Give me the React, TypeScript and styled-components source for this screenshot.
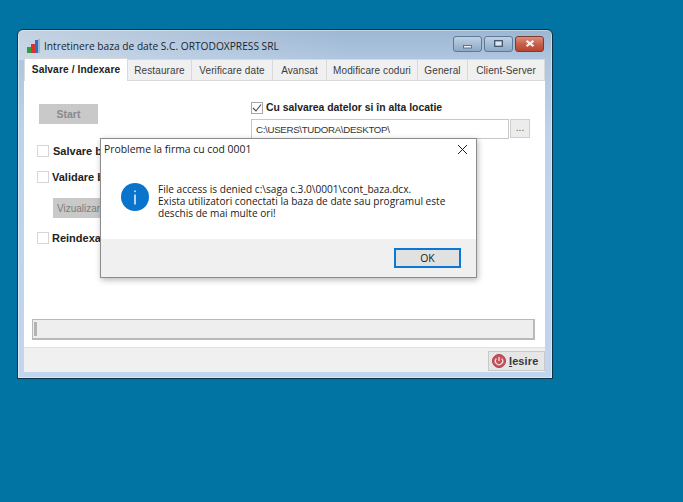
import styled, { createGlobalStyle } from 'styled-components';

const GlobalStyle = createGlobalStyle`
  html, body { margin: 0; padding: 0; height: 100%; }
  body { background: #0174a4; overflow: hidden; font-family: "Liberation Sans", Arial, sans-serif; }
`;

const Desktop = styled.div`
  position: relative;
  width: 683px;
  height: 502px;
  background: #0174a4;
`;

const AppWindow = styled.div`
  position: absolute;
  left: 17px;
  top: 29px;
  width: 536px;
  height: 350px;
  box-sizing: border-box;
  border: 1px solid #0c3346;
  border-radius: 6px 6px 0 0;
  background:
    linear-gradient(90deg, rgba(226, 232, 238, 0.55) 0%, rgba(226, 232, 238, 0) 62%) 0 0 / 100% 30px no-repeat,
    linear-gradient(180deg, #9db6d2 0%, #adc5df 8%, #bdd3ec 30%, #c1d6ee 100%);
  box-shadow: inset 0 0 0 1px rgba(255, 255, 255, 0.4);
  display: flex;
  flex-direction: column;
  padding: 0 7px 6px 6px;
`;

const TitleBar = styled.div`
  height: 27px;
  flex: none;
  display: flex;
  align-items: center;
  padding: 5px 0 0 3px;
  box-sizing: border-box;
`;

const AppTitle = styled.div`
  margin-left: 3px;
  font-family: "Open Sans", sans-serif;
  font-size: 10.2px;
  color: #1b2530;
  flex: 1;
  white-space: nowrap;
`;

const Controls = styled.div`
  display: flex;
  gap: 2px;
  margin: -5px 1px 0 0;
`;

const Control = styled.div<{ $danger?: boolean }>`
  width: 29px;
  height: 16px;
  box-sizing: border-box;
  border: 1px solid ${(p) => (p.$danger ? '#7d3a30' : '#5d7a98')};
  border-radius: 3px;
  background: ${(p) =>
    p.$danger
      ? 'linear-gradient(180deg, #d9907f 0%, #c8604c 50%, #b9432f 100%)'
      : 'linear-gradient(180deg, #c0d2e4 0%, #a6bdd5 50%, #8fa9c5 100%)'};
  display: flex;
  align-items: center;
  justify-content: center;
`;

const TabStrip = styled.div`
  display: flex;
  align-items: flex-end;
  height: 24px;
  flex: none;
`;

const Tab = styled.div<{ $w: number; $active?: boolean }>`
  width: ${(p) => p.$w}px;
  height: ${(p) => (p.$active ? 23 : 22)}px;
  box-sizing: border-box;
  display: flex;
  align-items: center;
  justify-content: center;
  background: ${(p) => (p.$active ? '#ffffff' : '#f0f0f0')};
  border: 1px solid #d9d9d9;
  border-left-width: ${(p) => (p.$active ? 1 : 0)}px;
  border-bottom: ${(p) => (p.$active ? 'none' : '1px solid #d9d9d9')};
  font-size: ${(p) => (p.$active ? 10.2 : 10)}px;
  font-weight: ${(p) => (p.$active ? 700 : 400)};
  padding-bottom: ${(p) => (p.$active ? 2 : 0)}px;
  letter-spacing: 0.1px;
  color: ${(p) => (p.$active ? '#222' : '#3c3c3c')};
`;

const Page = styled.div`
  flex: 1;
  background: #ffffff;
  display: flex;
  flex-direction: column;
  min-height: 0;
`;

const Columns = styled.div`
  display: flex;
  height: 238px;
  flex: none;
  box-sizing: border-box;
  padding: 20px 15px 0 13px;
`;

const LeftColumn = styled.div`
  width: 214px;
  flex: none;
  display: flex;
  flex-direction: column;
  align-items: flex-start;
  padding-top: 3px;
`;

const RightColumn = styled.div`
  flex: 1;
  display: flex;
  flex-direction: column;
`;

const GreyButton = styled.div<{ $w: number; $ml: number; $mb: number; $plain?: boolean }>`
  width: ${(p) => p.$w}px;
  height: 20px;
  margin-left: ${(p) => p.$ml}px;
  margin-bottom: ${(p) => p.$mb}px;
  background: #c9c9c9;
  color: ${(p) => (p.$plain ? '#7c7c7c' : '#8a8a8a')};
  font-size: ${(p) => (p.$plain ? 10 : 10.5)}px;
  font-weight: ${(p) => (p.$plain ? 400 : 700)};
  display: flex;
  align-items: center;
  justify-content: ${(p) => (p.$plain ? 'flex-start' : 'center')};
  padding-left: ${(p) => (p.$plain ? 4 : 0)}px;
  box-sizing: border-box;
  white-space: nowrap;
  flex: none;
`;

const CheckRow = styled.div<{ $mb?: number; $size?: number }>`
  display: flex;
  align-items: center;
  margin-bottom: ${(p) => p.$mb ?? 0}px;
  font-size: ${(p) => p.$size ?? 11}px;
  font-weight: 700;
  color: #222;
  white-space: nowrap;
  height: 13px;
`;

const Box = styled.span<{ $gap: number; $checked?: boolean }>`
  width: 12px;
  height: 12px;
  box-sizing: border-box;
  background: #fff;
  border: 1px solid ${(p) => (p.$checked ? '#a6a6a6' : '#d6d6d6')};
  margin-right: ${(p) => p.$gap}px;
  display: inline-flex;
  align-items: center;
  justify-content: center;
  flex: none;
`;

const PathRow = styled.div`
  display: flex;
  margin-top: 5px;
`;

const PathField = styled.div`
  width: 258px;
  height: 20px;
  box-sizing: border-box;
  border: 1px solid #c8c8c8;
  background: #fff;
  font-size: 9.7px;
  letter-spacing: -0.3px;
  color: #333;
  display: flex;
  align-items: center;
  padding-left: 4px;
`;

const BrowseButton = styled.div`
  width: 20px;
  height: 19px;
  margin-left: 1px;
  box-sizing: border-box;
  border: 1px solid #cfcfcf;
  background: #ececec;
  font-size: 10px;
  color: #555;
  text-align: center;
  line-height: 16px;
`;

const StatusWrap = styled.div`
  flex: 1;
  padding: 0 10px 0 8px;
`;

const StatusBar = styled.div`
  height: 21px;
  box-sizing: border-box;
  border: 1px solid #b9b9b9;
  border-bottom-width: 2px;
  border-right-width: 2px;
  background: #eeeeee;
  padding: 2px 1px;
  display: flex;
`;

const StatusMark = styled.div`
  width: 3px;
  background: #b4b4b4;
`;

const Footer = styled.div`
  height: 25px;
  flex: none;
  background: #f0f0f0;
  border-top: 1px solid #e2e2e2;
  box-sizing: border-box;
  display: flex;
  justify-content: flex-end;
  align-items: flex-start;
  padding-top: 3px;
`;

const ExitButton = styled.div`
  width: 57px;
  height: 20px;
  box-sizing: border-box;
  border: 1px solid #c9c9c9;
  background: #e6e6e6;
  display: flex;
  align-items: center;
  padding-left: 3px;
  gap: 3px;
  font-size: 11px;
  font-weight: 700;
  color: #3a3a3a;
  letter-spacing: 0.1px;
`;

const Dialog = styled.div`
  position: absolute;
  left: 100px;
  top: 138px;
  width: 377px;
  height: 140px;
  box-sizing: border-box;
  border: 1px solid #8c8c8c;
  background: #fff;
  box-shadow: 1px 2px 6px rgba(0, 0, 0, 0.28);
  display: flex;
  flex-direction: column;
  font-family: "Open Sans", sans-serif;
  color: #1a1a1a;
`;

const DialogHead = styled.div`
  height: 20px;
  flex: none;
  display: flex;
  align-items: center;
  justify-content: space-between;
  padding: 0 8px 0 3px;
  font-size: 10.4px;
`;

const DialogBody = styled.div`
  flex: 1;
  display: flex;
  align-items: flex-start;
  padding: 24px 0 0 20px;
`;

const Message = styled.div`
  margin-left: 9px;
  font-size: 10.1px;
  line-height: 12px;
  white-space: nowrap;
`;

const DialogFoot = styled.div`
  height: 38px;
  flex: none;
  background: #f0f0f0;
  display: flex;
  justify-content: flex-end;
  align-items: flex-start;
  padding: 9px 15px 0 0;
  box-sizing: border-box;
`;

const OkButton = styled.div`
  width: 67px;
  height: 20px;
  box-sizing: border-box;
  border: 2px solid #0a78d4;
  background: #e1e1e1;
  font-size: 10.4px;
  display: flex;
  align-items: center;
  justify-content: center;
`;

const tabs = [
  { label: 'Salvare / Indexare', w: 104, active: true },
  { label: 'Restaurare', w: 64 },
  { label: 'Verificare date', w: 81 },
  { label: 'Avansat', w: 54 },
  { label: 'Modificare coduri', w: 91 },
  { label: 'General', w: 50 },
  { label: 'Client-Server', w: 77 },
];

function ChartIcon() {
  return (
    <svg width="14" height="14" viewBox="0 0 14 14">
      <rect x="0" y="8" width="4" height="6" fill="#2e9e3f" />
      <rect x="4" y="5" width="4" height="9" fill="#d9342b" />
      <rect x="8" y="1" width="3" height="13" fill="#2f6fc4" />
      <rect x="11" y="0" width="2" height="14" fill="#9db8d6" />
    </svg>
  );
}

function InfoIcon() {
  return (
    <svg width="28" height="28" viewBox="0 0 28 28">
      <circle cx="14" cy="14" r="14" fill="#0a74cc" />
      <rect x="13.3" y="11.5" width="1.4" height="10" fill="#fff" />
      <rect x="13.3" y="7.5" width="1.4" height="1.6" fill="#fff" />
    </svg>
  );
}

function PowerIcon() {
  return (
    <svg width="14" height="14" viewBox="0 0 14 14">
      <circle cx="7" cy="7" r="6.5" fill="#c9505a" stroke="#a8424c" />
      <path d="M4.4 4.6 A3.6 3.6 0 1 0 9.6 4.6" fill="none" stroke="#f7dfe0" strokeWidth="1.3" />
      <path d="M7 3 V7" stroke="#f7dfe0" strokeWidth="1.3" />
    </svg>
  );
}

export default function App() {
  return (
    <Desktop>
      <GlobalStyle />
      <AppWindow>
        <TitleBar>
          <ChartIcon />
          <AppTitle>Intretinere baza de date S.C. ORTODOXPRESS SRL</AppTitle>
          <Controls>
            <Control>
              <svg width="9" height="10" viewBox="0 0 9 10">
                <rect x="0.5" y="6.5" width="8" height="2.5" fill="#e8eef5" stroke="#4a5f78" strokeWidth="0.8" />
              </svg>
            </Control>
            <Control>
              <svg width="9" height="7" viewBox="0 0 9 7">
                <rect x="0.7" y="0.7" width="7.6" height="5.6" fill="#dfe7ef" stroke="#3f5570" strokeWidth="1.3" />
              </svg>
            </Control>
            <Control $danger>
              <svg width="10" height="7" viewBox="0 0 10 7">
                <path d="M1.5 0.8 L8.5 6.2 M8.5 0.8 L1.5 6.2" stroke="#fbeeea" strokeWidth="2.1" />
              </svg>
            </Control>
          </Controls>
        </TitleBar>
        <TabStrip>
          {tabs.map((t) => (
            <Tab key={t.label} $w={t.w} $active={t.active}>
              {t.label}
            </Tab>
          ))}
        </TabStrip>
        <Page>
          <Columns>
            <LeftColumn>
              <GreyButton $w={59} $ml={2} $mb={20}>Start</GreyButton>
              <CheckRow $mb={13}>
                <Box $gap={4} />
                Salvare b
              </CheckRow>
              <CheckRow $mb={15}>
                <Box $gap={3} />
                Validare b
              </CheckRow>
              <GreyButton $w={47} $ml={16} $mb={13} $plain>Vizualizar</GreyButton>
              <CheckRow>
                <Box $gap={3} />
                Reindexa
              </CheckRow>
            </LeftColumn>
            <RightColumn>
              <CheckRow $size={10.4}>
                <Box $gap={3} $checked>
                  <svg width="10" height="10" viewBox="0 0 10 10">
                    <path d="M1 5 L4 8 L9 1.5" fill="none" stroke="#444" strokeWidth="1.1" />
                  </svg>
                </Box>
                Cu salvarea datelor si în alta locatie
              </CheckRow>
              <PathRow>
                <PathField>C:\USERS\TUDORA\DESKTOP\</PathField>
                <BrowseButton>...</BrowseButton>
              </PathRow>
            </RightColumn>
          </Columns>
          <StatusWrap>
            <StatusBar>
              <StatusMark />
            </StatusBar>
          </StatusWrap>
          <Footer>
            <ExitButton>
              <PowerIcon />
              <span><u>I</u>esire</span>
            </ExitButton>
          </Footer>
        </Page>
      </AppWindow>
      <Dialog>
        <DialogHead>
          <span>Probleme la firma cu cod 0001</span>
          <svg width="11" height="11" viewBox="0 0 11 11">
            <path d="M1 1 L10 10 M10 1 L1 10" stroke="#222" strokeWidth="1" />
          </svg>
        </DialogHead>
        <DialogBody>
          <InfoIcon />
          <Message>
            File access is denied c:\saga c.3.0\0001\cont_baza.dcx.
            <br />
            Exista utilizatori conectati la baza de date sau programul este
            <br />
            deschis de mai multe ori!
          </Message>
        </DialogBody>
        <DialogFoot>
          <OkButton>OK</OkButton>
        </DialogFoot>
      </Dialog>
    </Desktop>
  );
}
